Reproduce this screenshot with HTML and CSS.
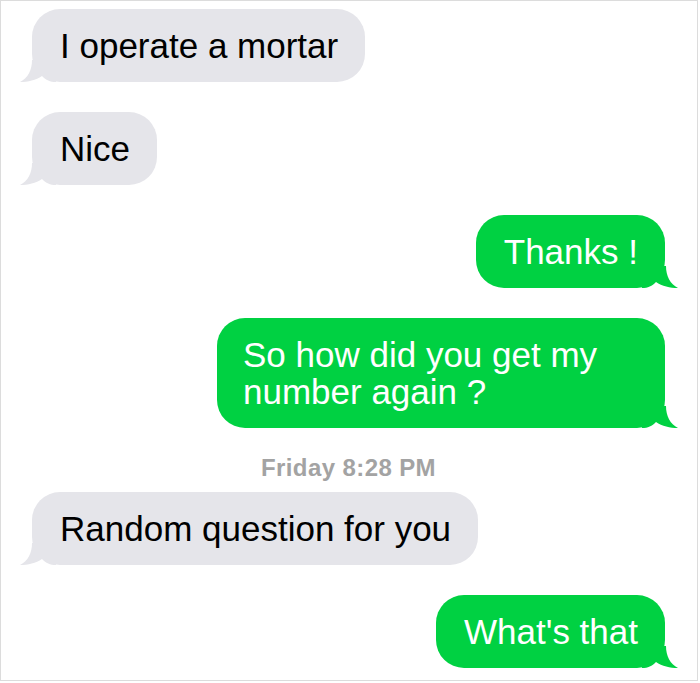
FILE: index.html
```html
<!DOCTYPE html>
<html lang="en">
<head>
    <meta charset="UTF-8">
    <meta name="viewport" content="width=device-width, initial-scale=1.0">
    <title>Messages</title>
    <link rel="stylesheet" href="styles.css">
</head>
<body>
    <div class="thread">
        <div class="msg in">
            <div class="bubble">I operate a mortar
                <svg class="tail" viewBox="0 0 36 22"><path d="M12 0 C12 10 8 18 0 22 C8 22 16 20 22 16 C26 20 30 22 36 22 L36 0 Z"/></svg>
            </div>
        </div>
        <div class="msg in">
            <div class="bubble">Nice
                <svg class="tail" viewBox="0 0 36 22"><path d="M12 0 C12 10 8 18 0 22 C8 22 16 20 22 16 C26 20 30 22 36 22 L36 0 Z"/></svg>
            </div>
        </div>
        <div class="msg out">
            <div class="bubble">Thanks !
                <svg class="tail" viewBox="0 0 36 22"><path d="M12 0 C12 10 8 18 0 22 C8 22 16 20 22 16 C26 20 30 22 36 22 L36 0 Z"/></svg>
            </div>
        </div>
        <div class="msg out">
            <div class="bubble wide">So how did you get my number again ?
                <svg class="tail" viewBox="0 0 36 22"><path d="M12 0 C12 10 8 18 0 22 C8 22 16 20 22 16 C26 20 30 22 36 22 L36 0 Z"/></svg>
            </div>
        </div>

        <div class="stamp">Friday 8:28 PM</div>

        <div class="msg in">
            <div class="bubble">Random question for you
                <svg class="tail" viewBox="0 0 36 22"><path d="M12 0 C12 10 8 18 0 22 C8 22 16 20 22 16 C26 20 30 22 36 22 L36 0 Z"/></svg>
            </div>
        </div>
        <div class="msg out">
            <div class="bubble">What's that
                <svg class="tail" viewBox="0 0 36 22"><path d="M12 0 C12 10 8 18 0 22 C8 22 16 20 22 16 C26 20 30 22 36 22 L36 0 Z"/></svg>
            </div>
        </div>
    </div>
</body>
</html>
```

FILE: styles.css
```css
body {
    margin: 0;
    background: #fff;
    font-family: "Liberation Sans", Arial, sans-serif;
}
.thread {
    width: 698px;
    height: 681px;
    box-sizing: border-box;
    border: 1px solid #dcdcdc;
    padding: 8px 32px 0 31px;
}
.msg {
    display: flex;
}
.msg + .msg {
    margin-top: 30px;
}
.msg.in {
    justify-content: flex-start;
}
.msg.out {
    justify-content: flex-end;
}
.bubble {
    position: relative;
    font-size: 35px;
    line-height: 37px;
    padding: 18px 27px 18px 28px;
    border-radius: 28px;
    max-width: 448px;
    box-sizing: border-box;
}
.wide {
    padding-left: 26px;
}
.in .bubble {
    background: #e5e5ea;
    color: #000;
}
.out .bubble {
    background: #00d142;
    color: #fff;
}
.tail {
    position: absolute;
    bottom: 0;
    width: 36px;
    height: 22px;
}
.in .tail {
    left: -12px;
    fill: #e5e5ea;
}
.out .tail {
    right: -13px;
    fill: #00d142;
    transform: scaleX(-1);
}
.stamp {
    margin: 28px 0 12px;
    text-align: center;
    font-size: 24px;
    line-height: 24px;
    font-weight: bold;
    letter-spacing: 0.4px;
    color: #a3a3a3;
}
```
